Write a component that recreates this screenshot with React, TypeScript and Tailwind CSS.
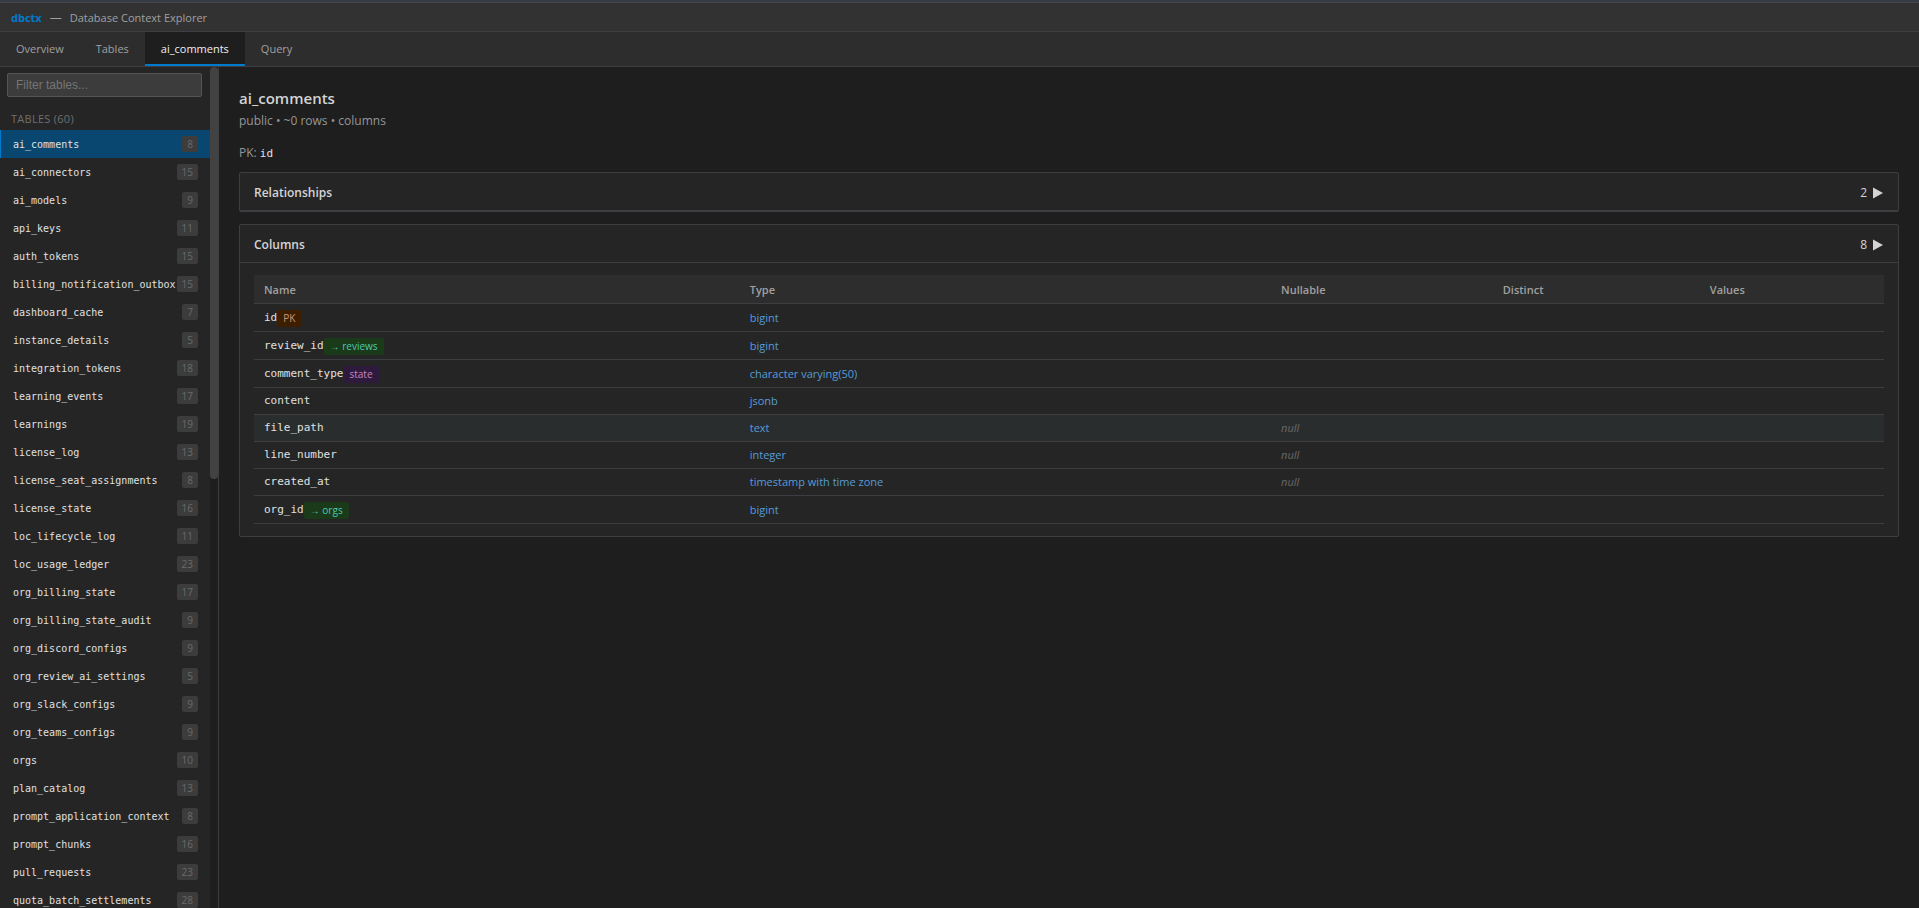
import { useState } from 'react'
import clsx from 'clsx'

const TABLES: [string, number][] = [
  ['ai_comments', 8],
  ['ai_connectors', 15],
  ['ai_models', 9],
  ['api_keys', 11],
  ['auth_tokens', 15],
  ['billing_notification_outbox', 15],
  ['dashboard_cache', 7],
  ['instance_details', 5],
  ['integration_tokens', 18],
  ['learning_events', 17],
  ['learnings', 19],
  ['license_log', 13],
  ['license_seat_assignments', 8],
  ['license_state', 16],
  ['loc_lifecycle_log', 11],
  ['loc_usage_ledger', 23],
  ['org_billing_state', 17],
  ['org_billing_state_audit', 9],
  ['org_discord_configs', 9],
  ['org_review_ai_settings', 5],
  ['org_slack_configs', 9],
  ['org_teams_configs', 9],
  ['orgs', 10],
  ['plan_catalog', 13],
  ['prompt_application_context', 8],
  ['prompt_chunks', 16],
  ['pull_requests', 23],
  ['quota_batch_settlements', 28],
]

type Column = { name: string; type: string; nullable?: boolean; badge?: { kind: 'pk' | 'fk' | 'state'; label: string } }

const COLUMNS: Column[] = [
  { name: 'id', type: 'bigint', badge: { kind: 'pk', label: 'PK' } },
  { name: 'review_id', type: 'bigint', badge: { kind: 'fk', label: '→ reviews' } },
  { name: 'comment_type', type: 'character varying(50)', badge: { kind: 'state', label: 'state' } },
  { name: 'content', type: 'jsonb' },
  { name: 'file_path', type: 'text', nullable: true },
  { name: 'line_number', type: 'integer', nullable: true },
  { name: 'created_at', type: 'timestamp with time zone', nullable: true },
  { name: 'org_id', type: 'bigint', badge: { kind: 'fk', label: '→ orgs' } },
]

const BADGE = {
  pk: 'bg-[#3d1f00] text-[#ce9178]',
  fk: 'bg-[#1a3a1a] text-[#4ec9b0]',
  state: 'bg-[#2d1a3d] text-[#c586c0]',
}

const MONO = "font-['DejaVu_Sans_Mono',monospace]"

function Section({ title, count, children }: { title: string; count: number; children?: React.ReactNode }) {
  return (
    <section className="mb-3 rounded-xs border border-[#3e3e42] bg-[#252526]">
      <button type="button" className="flex h-[38px] w-full items-center justify-between border-b border-[#3e3e42] px-3.5 pt-0.5 text-[12px] text-[#d4d4d4]">
        <h3 className="font-semibold">{title}</h3>
        <span className="flex items-center gap-1.5">
          {count}
          <svg width="11" height="12" viewBox="0 0 11 12" fill="currentColor" aria-hidden="true">
            <path d="M0 0.5 L10 6 L0 11.5 Z" />
          </svg>
        </span>
      </button>
      {children}
    </section>
  )
}

function Sidebar({ active, onSelect }: { active: string; onSelect: (t: string) => void }) {
  const [filter, setFilter] = useState('')
  const rows = TABLES.filter(([name]) => name.includes(filter.toLowerCase()))

  return (
    <aside className="flex w-[219px] shrink-0 border-r border-[#3e3e42] bg-[#252526]">
      <div className="min-w-0 flex-1 overflow-hidden">
        <div className="pt-1.5 pr-2 pl-[7px]">
          <input
            type="text"
            aria-label="Filter tables"
            placeholder="Filter tables..."
            value={filter}
            onChange={e => setFilter(e.target.value)}
            className="block h-6 w-full rounded-xs border border-[#555555] bg-[#3c3c3c] px-2 font-['Liberation_Sans',sans-serif] text-[12px] text-[#cccccc] outline-none placeholder:text-[#757575]"
          />
        </div>
        <div className="mt-[13px] px-[11px] pb-[3px] text-[11px] leading-[17px] tracking-wide text-[#6f6f6f] uppercase">Tables (60)</div>
        <ul>
          {rows.map(([name, count]) => (
            <li key={name}>
              <button
                type="button"
                onClick={() => onSelect(name)}
                className={clsx(
                  'flex h-7 w-full items-center justify-between border-l pr-3 pl-3 text-[#e0e0e0]',
                  name === active ? 'border-[#007acc] bg-[#094771]' : 'border-transparent hover:bg-[#2a2d2e]'
                )}
              >
                <span className={clsx('text-[10px] whitespace-nowrap', MONO)}>{name}</span>
                <span className="rounded-xs bg-[#3c3c3c] px-[5px] text-[10px] leading-4 text-[#6a6a6a]">{count}</span>
              </button>
            </li>
          ))}
        </ul>
      </div>
      <div className="w-2 shrink-0 bg-[#1e1e1e]">
        <div className="h-[49%] rounded-sm bg-[#424242]" />
      </div>
    </aside>
  )
}

export default function App() {
  const [table, setTable] = useState('ai_comments')
  const [tab, setTab] = useState('table')
  const tabs = [
    { id: 'overview', label: 'Overview' },
    { id: 'tables', label: 'Tables' },
    { id: 'table', label: table },
    { id: 'query', label: 'Query' },
  ]

  return (
    <div className="flex h-screen flex-col overflow-hidden bg-[#1e1e1e] font-['Open_Sans',sans-serif] text-[12px] text-[#cccccc]">
      <div className="h-[3px] shrink-0 border-b border-[#46464a] bg-[#373a47]" />
      <header className="flex h-[29px] shrink-0 items-center gap-2 border-b border-[#3e3e42] bg-[#323233] px-[11px] pt-0.5 text-[11px] text-[#a0a0a0]">
        <span className="font-bold text-[#007acc]">dbctx</span>
        <span className="text-[12px]">—</span>
        <h1>Database Context Explorer</h1>
      </header>
      <nav className="flex h-[35px] shrink-0 border-b border-[#3e3e42] bg-[#2d2d2d] text-[11px]">
        {tabs.map(t => (
          <button
            key={t.id}
            type="button"
            onClick={() => setTab(t.id)}
            className={clsx(
              'border-b-2 px-4 pt-0.5',
              t.id === tab ? 'border-[#007acc] bg-[#1e1e1e] text-[#f0f0f0]' : 'border-transparent text-[#a0a0a0]'
            )}
          >
            {t.label}
          </button>
        ))}
      </nav>

      <div className="flex min-h-0 flex-1">
        <Sidebar active={table} onSelect={setTable} />
        <main className="min-w-0 flex-1 overflow-auto p-5">
          <h2 className="pt-px text-[15px] leading-[21px] font-semibold text-[#d4d4d4]">{table}</h2>
          <p className="mt-1 leading-4 text-[#969696]">public • ~0 rows • columns</p>
          <p className="mt-4 mb-2.5 leading-4 text-[#969696]">
            PK: <code className={clsx('text-[11px] text-[#e0e0e0]', MONO)}>id</code>
          </p>

          <Section title="Relationships" count={2} />

          <Section title="Columns" count={8}>
            <div className="px-[14px] py-3">
              <table className="w-full table-fixed border-collapse text-left text-[11px]">
                <colgroup>
                  <col className="w-[29.8%]" />
                  <col className="w-[32.6%]" />
                  <col className="w-[13.6%]" />
                  <col className="w-[12.7%]" />
                  <col />
                </colgroup>
                <thead>
                  <tr className="h-7 border-b border-[#3e3e42] bg-[#2d2d2d] text-[#a0a0a0]">
                    {['Name', 'Type', 'Nullable', 'Distinct', 'Values'].map(h => (
                      <th key={h} className="px-2.5 pt-0.5 font-semibold">{h}</th>
                    ))}
                  </tr>
                </thead>
                <tbody>
                  {COLUMNS.map(c => (
                    <tr
                      key={c.name}
                      className={clsx('border-b border-[#3e3e42]', c.badge ? 'h-7' : 'h-[27px]', c.name === 'file_path' && 'bg-[#2a2d2e]')}
                    >
                      <td className="px-2.5 pt-0.5">
                        <div className="flex items-center">
                          <span className={clsx('text-[#e0e0e0]', MONO)}>{c.name}</span>
                          {c.badge && (
                            <span className={clsx('rounded-xs px-1.5 text-[10px] leading-[17px]', BADGE[c.badge.kind])}>{c.badge.label}</span>
                          )}
                        </div>
                      </td>
                      <td className="px-2.5 pt-0.5 text-[#569cd6]">{c.type}</td>
                      <td className="px-2.5 pt-0.5 text-[#6a6a6a] italic">{c.nullable && 'null'}</td>
                      <td className="px-2.5" />
                      <td className="px-2.5" />
                    </tr>
                  ))}
                </tbody>
              </table>
            </div>
          </Section>
        </main>
      </div>
    </div>
  )
}
